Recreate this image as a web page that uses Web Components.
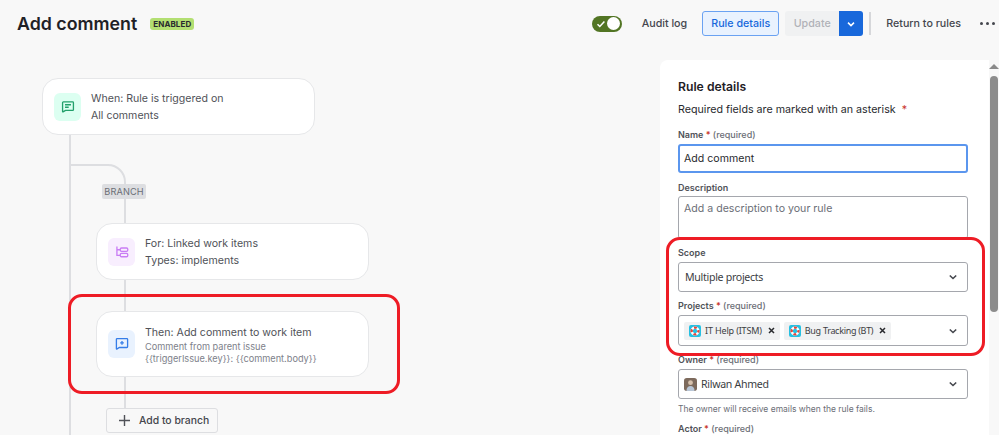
<!DOCTYPE html>
<html>
<head>
<meta charset="utf-8">
<title>Add comment</title>
<style>
  html, body { margin: 0; height: 100%; overflow: hidden; background: #f8f8f8; }
  body { font-family: Inter, "Liberation Sans", sans-serif; color: #292a2e; }
</style>
</head>
<body>
<rule-page>
  <top-bar slot="top" title-text="Add comment"></top-bar>
  <flow-canvas slot="canvas">
    <flow-node style="left:42px;top:78px;height:57px" tone="green">
      <svg slot="icon" width="14" height="14" viewBox="0 0 16 16" fill="none" stroke="currentColor" stroke-width="1.5"><path d="M2.6 2.2h10.8a.8.8 0 0 1 .8.8v8a.8.8 0 0 1-.8.8H5.2l-2.9 1.7a.3.3 0 0 1-.5-.3V3a.8.8 0 0 1 .8-.8z"/><path d="M4.6 5.4h6.8M4.6 8.3h4.2"/></svg>
      <div>When: Rule is triggered on</div>
      <div>All comments</div>
    </flow-node>
    <flow-node style="left:96px;top:223px;height:57px" tone="purple">
      <svg slot="icon" width="14" height="14" viewBox="0 0 16 16" fill="none" stroke="currentColor" stroke-width="1.5"><path d="M2.2 1.6v10.2h3.6M2.2 5.4h3.6"/><rect x="6" y="3.4" width="8.6" height="3.8" rx="1.4"/><rect x="6" y="9.6" width="8.6" height="3.8" rx="1.4"/></svg>
      <div>For: Linked work items</div>
      <div>Types: implements</div>
    </flow-node>
    <flow-node style="left:96px;top:311px;height:66px" tone="blue">
      <svg slot="icon" width="14" height="14" viewBox="0 0 16 16" fill="none" stroke="currentColor" stroke-width="1.5"><path d="M2.4 1.8h11.2a.8.8 0 0 1 .8.8v8.6a.8.8 0 0 1-.8.8H5l-3 1.8a.3.3 0 0 1-.4-.3V2.6a.8.8 0 0 1 .8-.8z"/><path d="M8 4.6v4.2M5.9 6.7h4.2"/></svg>
      <div>Then: Add comment to work item</div>
      <small>Comment from parent issue</small>
      <small>{{triggerIssue.key}}: {{comment.body}}</small>
    </flow-node>
    <flow-add style="left:106px;top:408px">Add to branch</flow-add>
  </flow-canvas>
  <details-panel slot="panel">
    <h-line>Rule details</h-line>
    <form-field gap="5"><span style="font-family:Inter,sans-serif;font-size:10.7px">Required fields are marked with an asterisk<b style="color:#c9372c;font-weight:400;margin-left:6px">*</b></span></form-field>
    <form-field gap="10" label="Name" required>
      <text-box focused style="height:29px">Add comment</text-box>
    </form-field>
    <form-field gap="8" label="Description">
      <text-box placeholder style="height:43px;margin-top:-1px">Add a description to your rule</text-box>
    </form-field>
    <form-field gap="7" label="Scope">
      <select-box style="height:30px">Multiple projects</select-box>
    </form-field>
    <form-field gap="7" label="Projects" required>
      <select-box style="height:31px">
        <project-chip style="margin-left:-1px">IT Help (ITSM)</project-chip>
        <project-chip style="letter-spacing:-.3px">Bug Tracking (BT)</project-chip>
      </select-box>
    </form-field>
    <form-field gap="7" label="Owner" required>
      <select-box style="height:30px">
        <svg width="13" height="13" viewBox="0 0 14 14" style="flex:none;margin-left:-1px"><rect width="14" height="14" rx="3" fill="#7d6a5c"/><circle cx="7" cy="5" r="2.6" fill="#d8c2ad"/><path d="M2.6 14c0-3.6 2-5.4 4.4-5.4s4.4 1.8 4.4 5.4z" fill="#b9c6d6"/></svg>Rilwan Ahmed
      </select-box>
      <help-line>The owner will receive emails when the rule fails.</help-line>
    </form-field>
    <form-field gap="6" label="Actor" required></form-field>
  </details-panel>
  <red-callout style="left:68px;top:294px;width:332px;height:100px"></red-callout>
  <red-callout style="left:666px;top:237px;width:319px;height:119px"></red-callout>
</rule-page>

<script>
const FONT = 'Inter, "Liberation Sans", sans-serif'
const FORM_FONT = '"Noto Sans", "Open Sans", sans-serif'

class RulePage extends HTMLElement {
  constructor () {
    super()
    this.attachShadow({ mode: 'open' }).innerHTML = `
    <style>
      :host { display: block; position: relative; width: 999px; height: 435px; overflow: hidden; background: #f8f8f8; }
      .main { display: grid; grid-template-columns: 660px 1fr; height: 388px; margin-top: 13px; }
    </style>
    <slot name="top"></slot>
    <div class="main"><slot name="canvas"></slot><slot name="panel"></slot></div>
    <slot></slot>`
  }
}

class TopBar extends HTMLElement {
  constructor () {
    super()
    this.attachShadow({ mode: 'open' })
  }

  connectedCallback () {
    this.shadowRoot.innerHTML = `
    <style>
      :host { display: flex; align-items: center; height: 47px; box-sizing: border-box; font-family: ${FONT}; color: #44464d; font-size: 10.7px; }
      h1 { margin: 0 0 0 17px; font-size: 17.8px; font-weight: 600; color: #1f2126; }
      .badge { margin-left: 13px; background: #b3df72; color: #292a2e; font-size: 8px; font-weight: 700; line-height: 12px; padding: 0 3px; border-radius: 3px; letter-spacing: .1px; }
      .spacer { flex: 1; }
      .toggle { width: 30px; height: 16px; border-radius: 8px; background: #527524; position: relative; }
      .toggle svg { position: absolute; left: 4px; top: 3px; }
      .toggle i { position: absolute; right: 1.5px; top: 1.5px; width: 13px; height: 13px; border-radius: 50%; background: #fff; }
      .link { font-weight: 500; white-space: nowrap; }
      .details { box-sizing: border-box; width: 77px; height: 25px; margin-left: 15px; display: flex; align-items: center; justify-content: center; color: #1868db; font-weight: 500; background: #e9f2fe; border: 1px solid #6aa2f2; border-radius: 3px; }
      .update { width: 54px; height: 25px; margin-left: 6px; display: flex; align-items: center; justify-content: center; color: #b0b2b8; font-weight: 500; background: #f0f1f2; border-radius: 3px 0 0 3px; }
      .more { width: 24px; height: 25px; display: flex; align-items: center; justify-content: center; background: #1868db; border-radius: 0 3px 3px 0; }
      .sep { width: 2px; height: 23px; margin: 0 15px 0 6px; background: #d6d7da; }
      .dots { margin: 0 4px 0 19px; display: flex; gap: 3px; }
      .dots i { width: 3px; height: 3px; border-radius: 50%; background: #44464d; }
    </style>
    <h1>${this.getAttribute('title-text')}</h1>
    <span class="badge">ENABLED</span>
    <span class="spacer"></span>
    <span class="toggle">
      <svg width="10" height="10" viewBox="0 0 10 10" fill="none" stroke="#fff" stroke-width="1.5"><path d="M1.5 5.2l2.3 2.3 4.6-5"/></svg>
      <i></i>
    </span>
    <span class="link" style="margin-left:20px">Audit log</span>
    <span class="details">Rule details</span>
    <span class="update">Update</span>
    <span class="more"><svg width="10" height="10" viewBox="0 0 10 10" fill="none" stroke="#fff" stroke-width="1.5"><path d="M2 3.6l3 3 3-3"/></svg></span>
    <span class="sep"></span>
    <span class="link">Return to rules</span>
    <span class="dots"><i></i><i></i><i></i></span>`
  }
}

class FlowCanvas extends HTMLElement {
  constructor () {
    super()
    // the canvas starts at y=60 of the page, diagram coordinates stay page based
    this.attachShadow({ mode: 'open' }).innerHTML = `
    <style>
      :host { display: block; position: relative; height: 388px; }
      .plane { position: absolute; left: 0; top: -60px; width: 660px; height: 435px; }
      svg { position: absolute; left: 0; top: 0; }
      .tag { position: absolute; left: 102px; top: 184px; width: 44px; height: 15px; display: flex; align-items: center; justify-content: center; background: #dddee1; border-radius: 2px; color: #6b6e76; font: 400 9.2px/15px ${FONT}; letter-spacing: .1px; }
    </style>
    <div class="plane">
      <svg width="660" height="435" fill="none" stroke="#dddee1" stroke-width="2">
        <path d="M70 135V435"/>
        <path d="M70 165H108a17 17 0 0 1 17 17V223"/>
        <path d="M125 280V311M125 377V408"/>
      </svg>
      <span class="tag">BRANCH</span>
      <slot></slot>
    </div>`
  }
}

const TONES = {
  green: ['#dcfff1', '#22a06b'],
  purple: ['#f8eefe', '#c97cf4'],
  blue: ['#e9f2fe', '#357de8']
}

class FlowNode extends HTMLElement {
  constructor () {
    super()
    this.attachShadow({ mode: 'open' })
  }

  connectedCallback () {
    const tone = TONES[this.getAttribute('tone')]
    this.shadowRoot.innerHTML = `
    <style>
      :host { position: absolute; box-sizing: border-box; width: 273px; display: flex; align-items: center; gap: 10px; padding: 0 11px; background: #fff; border: 1px solid #e6e7e9; border-radius: 16px; font: 400 10.6px/16.5px ${FONT}; color: #505258; }
      .icon { flex: none; width: 27px; height: 28px; border-radius: 6px; display: flex; align-items: center; justify-content: center; background: ${tone[0]}; color: ${tone[1]}; }
      .text { padding-top: 2px; }
      ::slotted(small) { display: block; font-size: 9.2px; line-height: 12px; color: #7d818a; }
    </style>
    <span class="icon"><slot name="icon"></slot></span>
    <div class="text"><slot></slot></div>`
  }
}

class FlowAdd extends HTMLElement {
  constructor () {
    super()
    this.attachShadow({ mode: 'open' }).innerHTML = `
    <style>
      :host { position: absolute; box-sizing: border-box; width: 112px; height: 25px; display: flex; align-items: center; gap: 8px; padding-left: 11px; background: #f8f8f8; border: 1px solid #dddee1; border-radius: 3px; font: 500 10.4px ${FONT}; color: #44464d; white-space: nowrap; }
      svg { flex: none; }
    </style>
    <svg width="13" height="13" viewBox="0 0 13 13" fill="none" stroke="#505258" stroke-width="1.4"><path d="M6.5 1v11M1 6.5h11"/></svg>
    <slot></slot>`
  }
}

class DetailsPanel extends HTMLElement {
  constructor () {
    super()
    this.attachShadow({ mode: 'open' }).innerHTML = `
    <style>
      :host { display: flex; height: 388px; overflow: hidden; background: #fff; border-radius: 8px 0 0 0; font-family: ${FORM_FONT}; }
      .body { width: 290px; padding: 18px 0 0 18px; flex: none; }
      .track { margin-left: 21px; width: 10px; background: #f8f8f8; position: relative; flex: none; }
      .up { position: absolute; left: 0; top: 4px; border: 5px solid transparent; border-top: 0; border-bottom-color: #8a8a8a; }
      .thumb { position: absolute; left: 1px; top: 16px; width: 8px; height: 236px; border-radius: 4px; background: #8c8c8c; }
    </style>
    <div class="body"><slot></slot></div>
    <div class="track"><i class="up"></i><i class="thumb"></i></div>`
  }
}

class HLine extends HTMLElement {
  constructor () {
    super()
    this.attachShadow({ mode: 'open' }).innerHTML = `
    <style>:host { display: block; font: 600 12.2px/18px ${FONT}; color: #1f2126; }</style>
    <slot></slot>`
  }
}

class FormField extends HTMLElement {
  constructor () {
    super()
    this.attachShadow({ mode: 'open' })
  }

  connectedCallback () {
    const label = this.getAttribute('label')
    const req = this.hasAttribute('required')
      ? '<b>*</b> <em>(required)</em>' : ''
    this.shadowRoot.innerHTML = `
    <style>
      :host { display: block; margin-top: ${this.getAttribute('gap')}px; font: 400 12.5px/16px ${FORM_FONT}; color: #292a2e; }
      .label { display: block; height: 14px; font: 600 9px/13px ${FONT}; color: #505258; margin-bottom: 2px; }
      b { color: #c9372c; font-weight: 600; }
      em { font-style: normal; font-weight: 500; color: #6b6e76; }
    </style>
    ${label ? `<span class="label">${label} ${req}</span>` : ''}
    <slot></slot>`
  }
}

class TextBox extends HTMLElement {
  constructor () {
    super()
    this.attachShadow({ mode: 'open' })
  }

  connectedCallback () {
    const focused = this.hasAttribute('focused')
    const ph = this.hasAttribute('placeholder')
    this.shadowRoot.innerHTML = `
    <style>
      :host { display: block; box-sizing: border-box; width: 290px; background: #fff; border-radius: 3px;
        border: ${focused ? '2px solid #5b96ee' : '1px solid #a5a7ad'};
        padding: ${focused ? '4px 4px' : '3px 5px'};
        font: 400 10.6px/18px ${FONT}; color: ${ph ? '#6b6e76' : '#292a2e'}; }
    </style>
    <slot></slot>`
  }
}

class SelectBox extends HTMLElement {
  constructor () {
    super()
    this.attachShadow({ mode: 'open' }).innerHTML = `
    <style>
      :host { display: flex; align-items: center; box-sizing: border-box; width: 290px; background: #fff; border: 1px solid #a5a7ad; border-radius: 3px; padding: 0 9px 0 6px; font: 400 10.6px ${FORM_FONT}; letter-spacing: -.3px; color: #3b3d42; }
      .content { flex: 1; display: flex; align-items: center; gap: 4px; }
    </style>
    <div class="content"><slot></slot></div>
    <svg width="10" height="10" viewBox="0 0 10 10" fill="none" stroke="#44464d" stroke-width="1.6"><path d="M1.8 3.5l3.2 3 3.2-3"/></svg>`
  }
}

class ProjectChip extends HTMLElement {
  constructor () {
    super()
    this.attachShadow({ mode: 'open' }).innerHTML = `
    <style>
      :host { display: flex; align-items: center; height: 18px; padding: 0 5px; background: #f0f1f2; border-radius: 2px; font: 400 9px/18px ${FORM_FONT}; letter-spacing: -.15px; color: #3b3d42; white-space: nowrap; }
      svg { margin-right: 4px; flex: none; }
      .x { margin: 0 0 0 6px; }
    </style>
    <svg width="12" height="12" viewBox="0 0 12 12"><rect width="12" height="12" rx="2" fill="#26c0e2"/><circle cx="6" cy="6" r="3.4" fill="none" stroke="#fff" stroke-width="2.4"/><circle cx="6" cy="6" r="3.4" fill="none" stroke="#e2483d" stroke-width="2.4" stroke-dasharray="2.9 2.44" stroke-dashoffset="1.45"/></svg>
    <slot></slot>
    <svg class="x" width="7" height="7" viewBox="0 0 7 7" fill="none" stroke="#292a2e" stroke-width="1.5"><path d="M1 1l5 5M6 1L1 6"/></svg>`
  }
}

class HelpLine extends HTMLElement {
  constructor () {
    super()
    this.attachShadow({ mode: 'open' }).innerHTML = `
    <style>:host { display: block; margin-top: 3px; font: 400 8.5px/14px ${FONT}; color: #6b6e76; }</style>
    <slot></slot>`
  }
}

class RedCallout extends HTMLElement {
  constructor () {
    super()
    this.attachShadow({ mode: 'open' }).innerHTML = `
    <style>
      :host { position: absolute; box-sizing: border-box; border: 3px solid #ee1c25; border-radius: 14px; pointer-events: none; }
    </style>`
  }
}

customElements.define('rule-page', RulePage)
customElements.define('top-bar', TopBar)
customElements.define('flow-canvas', FlowCanvas)
customElements.define('flow-node', FlowNode)
customElements.define('flow-add', FlowAdd)
customElements.define('details-panel', DetailsPanel)
customElements.define('h-line', HLine)
customElements.define('form-field', FormField)
customElements.define('text-box', TextBox)
customElements.define('select-box', SelectBox)
customElements.define('project-chip', ProjectChip)
customElements.define('help-line', HelpLine)
customElements.define('red-callout', RedCallout)
</script>
</body>
</html>
